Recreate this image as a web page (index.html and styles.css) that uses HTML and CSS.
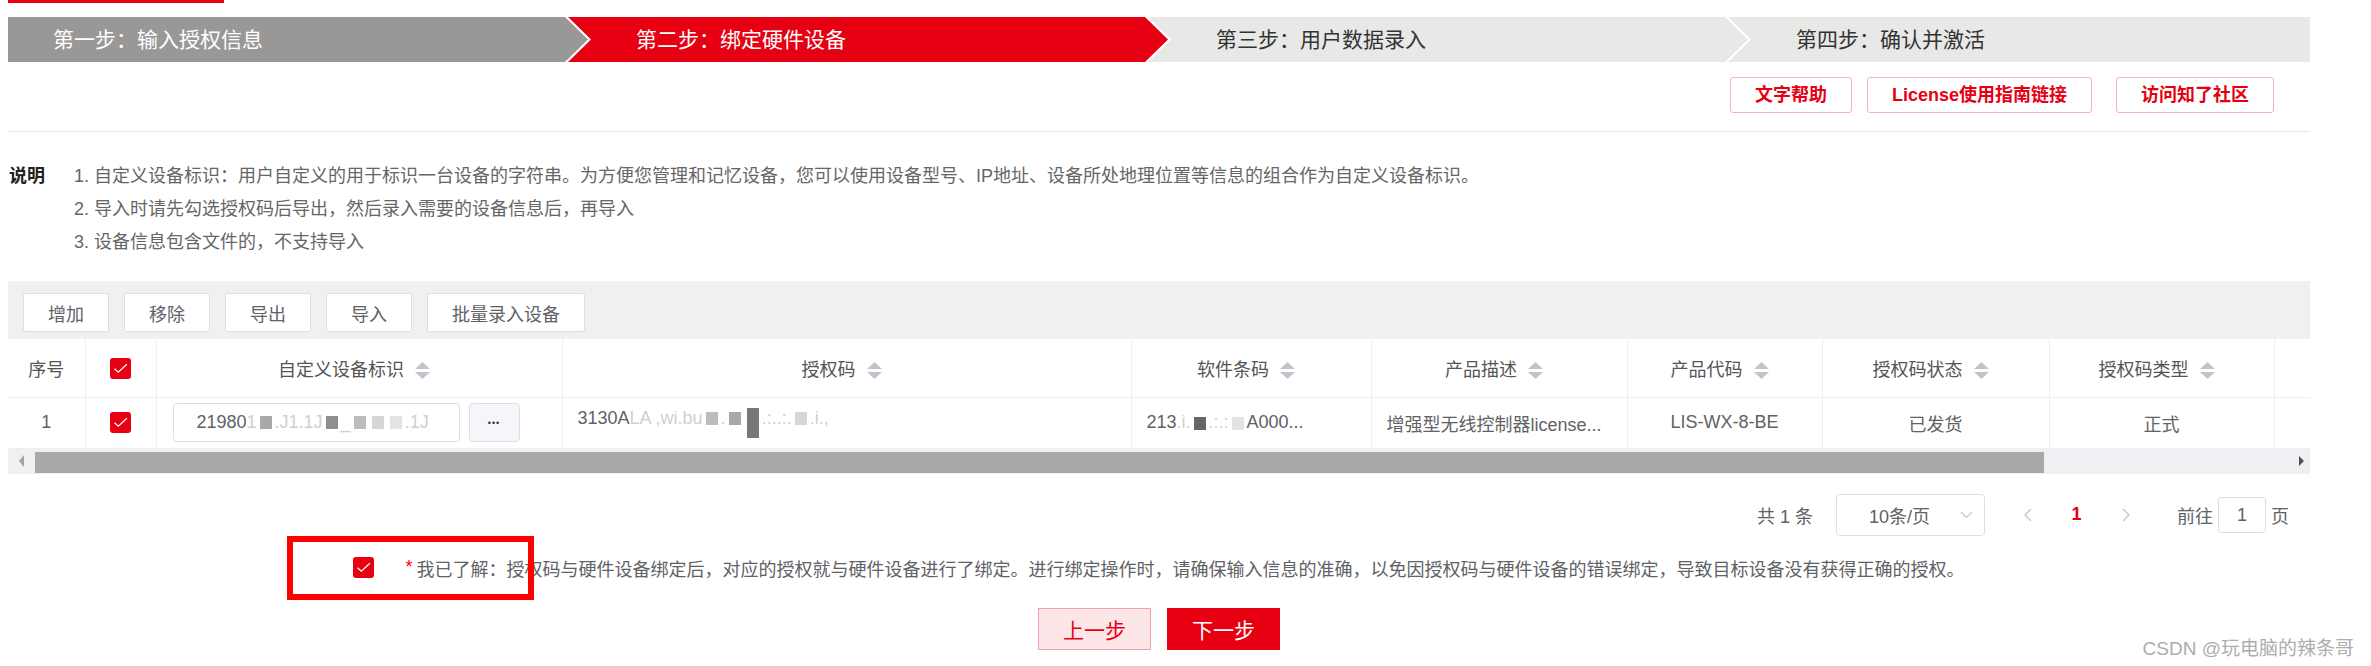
FILE: index.html
```html
<!DOCTYPE html>
<html lang="zh-CN">
<head>
    <meta charset="UTF-8">
    <meta name="viewport" content="width=device-width, initial-scale=1.0">
    <title>绑定硬件设备</title>
    <link rel="stylesheet" href="styles.css">
</head>
<body>

<div class="page">
    <div class="tab-line"></div>

    <!-- step bar -->
    <div class="steps">
        <div class="step step-done">第一步：输入授权信息</div>
        <div class="step step-active">第二步：绑定硬件设备</div>
        <div class="step">第三步：用户数据录入</div>
        <div class="step">第四步：确认并激活</div>
    </div>

    <div class="help-links">
        <a class="help-btn">文字帮助</a>
        <a class="help-btn">License使用指南链接</a>
        <a class="help-btn help-far">访问知了社区</a>
    </div>

    <div class="rule"></div>

    <div class="note">
        <div class="note-title">说明</div>
        <div class="note-list">
            <div>1. 自定义设备标识：用户自定义的用于标识一台设备的字符串。为方便您管理和记忆设备，您可以使用设备型号、IP地址、设备所处地理位置等信息的组合作为自定义设备标识。</div>
            <div>2. 导入时请先勾选授权码后导出，然后录入需要的设备信息后，再导入</div>
            <div>3. 设备信息包含文件的，不支持导入</div>
        </div>
    </div>

    <div class="toolbar">
        <button class="tool-btn">增加</button>
        <button class="tool-btn">移除</button>
        <button class="tool-btn">导出</button>
        <button class="tool-btn">导入</button>
        <button class="tool-btn">批量录入设备</button>
    </div>

    <table class="grid">
        <colgroup>
            <col style="width:77px">
            <col style="width:71px">
            <col style="width:406px">
            <col style="width:569px">
            <col style="width:240px">
            <col style="width:256px">
            <col style="width:195px">
            <col style="width:227px">
            <col style="width:225px">
            <col style="width:36px">
        </colgroup>
        <thead>
            <tr class="head-row">
                <th>序号</th>
                <th><span class="check"><svg viewBox="0 0 21 21"><path d="M4.5 10.7l3.8 3.6 8.6-8" fill="none" stroke="#fff" stroke-width="1.2"/></svg></span></th>
                <th>自定义设备标识<svg class="sort" viewBox="0 0 15 17"><path d="M7.5 0L15 7H0z M0 10h15l-7.5 7z" fill="#c0c4cc"/></svg></th>
                <th>授权码<svg class="sort" viewBox="0 0 15 17"><path d="M7.5 0L15 7H0z M0 10h15l-7.5 7z" fill="#c0c4cc"/></svg></th>
                <th>软件条码<svg class="sort" viewBox="0 0 15 17"><path d="M7.5 0L15 7H0z M0 10h15l-7.5 7z" fill="#c0c4cc"/></svg></th>
                <th>产品描述<svg class="sort" viewBox="0 0 15 17"><path d="M7.5 0L15 7H0z M0 10h15l-7.5 7z" fill="#c0c4cc"/></svg></th>
                <th>产品代码<svg class="sort" viewBox="0 0 15 17"><path d="M7.5 0L15 7H0z M0 10h15l-7.5 7z" fill="#c0c4cc"/></svg></th>
                <th>授权码状态<svg class="sort" viewBox="0 0 15 17"><path d="M7.5 0L15 7H0z M0 10h15l-7.5 7z" fill="#c0c4cc"/></svg></th>
                <th>授权码类型<svg class="sort" viewBox="0 0 15 17"><path d="M7.5 0L15 7H0z M0 10h15l-7.5 7z" fill="#c0c4cc"/></svg></th>
                <th></th>
            </tr>
        </thead>
        <tbody>
            <tr class="body-row">
                <td>1</td>
                <td><span class="check"><svg viewBox="0 0 21 21"><path d="M4.5 10.7l3.8 3.6 8.6-8" fill="none" stroke="#fff" stroke-width="1.2"/></svg></span></td>
                <td class="cell-left">
                    <div class="id-field">
                        <div class="id-input">21980<span class="faint">1</span><i class="px p2"></i><span class="faint">.J1.1J</span><i class="px p1"></i><span class="faint">_</span><i class="px p3"></i><i class="px p4"></i><i class="px p5"></i><span class="faint">.1J</span></div>
                        <button class="more-btn">•••</button>
                    </div>
                </td>
                <td class="cell-left">3130A<span class="faint">LA ,wi.bu</span><i class="px p3"></i><span class="faint">.</span><i class="px p2"></i><i class="px tall"></i><span class="faint">.:..:.</span><i class="px p4"></i><span class="faint">.i.,</span></td>
                <td class="cell-left">213<span class="faint">.i.</span><i class="px dark"></i><span class="faint">.:.:</span><i class="px p5"></i>A000...</td>
                <td class="cell-left">增强型无线控制器license...</td>
                <td>LIS-WX-8-BE</td>
                <td>已发货</td>
                <td>正式</td>
                <td></td>
            </tr>
        </tbody>
    </table>

    <!-- horizontal scrollbar under the table -->
    <div class="hscroll">
        <div class="hs-arrow"><span class="tri-left"></span></div>
        <div class="hs-thumb"></div>
        <div class="hs-track"></div>
        <div class="hs-arrow hs-arrow-right"><span class="tri-right"></span></div>
    </div>

    <div class="pager">
        <span class="total">共 1 条</span>
        <div class="sizes">
            <span>10条/页</span>
            <svg class="drop" viewBox="0 0 13 8"><polyline points="1,1 6.5,6.5 12,1" fill="none" stroke="#c0c4cc" stroke-width="1.2"/></svg>
        </div>
        <span class="pg-btn pg-prev"><svg viewBox="0 0 8 14"><polyline points="7,1 1,7 7,13" fill="none" stroke="#c0c4cc" stroke-width="1.3"/></svg></span>
        <span class="pg-num">1</span>
        <span class="pg-btn"><svg viewBox="0 0 8 14"><polyline points="1,1 7,7 1,13" fill="none" stroke="#c0c4cc" stroke-width="1.3"/></svg></span>
        <span class="jump">前往<span class="jump-input">1</span>页</span>
    </div>

    <div class="agree">
        <span class="agree-check">
            <span class="check"><svg viewBox="0 0 21 21"><path d="M4.5 10.7l3.8 3.6 8.6-8" fill="none" stroke="#fff" stroke-width="1.2"/></svg></span>
            <span class="mark"></span>
        </span>
        <span class="star">*</span>
        <span>我已了解：授权码与硬件设备绑定后，对应的授权就与硬件设备进行了绑定。进行绑定操作时，请确保输入信息的准确，以免因授权码与硬件设备的错误绑定，导致目标设备没有获得正确的授权。</span>
    </div>

    <div class="actions">
        <button class="btn btn-prev">上一步</button>
        <button class="btn btn-next">下一步</button>
    </div>
</div>

<div class="watermark">CSDN @玩电脑的辣条哥</div>

</body>
</html>
```

FILE: styles.css
```css
body {
    margin: 0;
    font-family: "Liberation Sans", "Noto Sans CJK SC", sans-serif;
    color: #606266;
    background: #fff;
}
.page {
    width: 2302px;
    margin-left: 8px;
}
.tab-line {
    width: 216px;
    height: 3px;
    background: #e60012;
}

/* steps */
.steps {
    display: flex;
    height: 45px;
    margin-top: 14px;
}
.step {
    width: 600px;
    margin-left: -20px;
    padding-left: 68px;
    box-sizing: border-box;
    line-height: 45px;
    font-size: 21px;
    color: #333;
    background: #e8e8e6;
    white-space: nowrap;
    clip-path: polygon(0 0, calc(100% - 23px) 0, 100% 50%, calc(100% - 23px) 100%, 0 100%, 23px 50%);
}
.step:first-child {
    width: 580px;
    margin-left: 0;
    padding-left: 45px;
    clip-path: polygon(0 0, calc(100% - 23px) 0, 100% 50%, calc(100% - 23px) 100%, 0 100%);
}
.step:last-child {
    flex: 1;
    clip-path: polygon(0 0, 100% 0, 100% 100%, 0 100%, 23px 50%);
}
.step-done {
    background: #9a9896;
    color: #fff;
}
.step-active {
    background: #e60012;
    color: #fff;
}

/* help links */
.help-links {
    display: flex;
    justify-content: flex-end;
    margin-top: 15px;
    padding-right: 36px;
}
.help-btn {
    height: 36px;
    line-height: 34px;
    padding: 0 24px;
    border: 1px solid #f7b3b8;
    border-radius: 3px;
    color: #e60012;
    font-size: 18px;
    font-weight: bold;
    margin-left: 15px;
    box-sizing: border-box;
    cursor: pointer;
}
.help-far {
    margin-left: 24px;
}
.rule {
    height: 1px;
    background: #e8e8e8;
    margin-top: 18px;
}

/* description */
.note {
    display: flex;
    margin-top: 28px;
    font-size: 18px;
    line-height: 33px;
}
.note-title {
    width: 65px;
    padding-left: 1px;
    font-weight: bold;
    color: #222;
}
.note-list {
    color: #666;
}

/* toolbar */
.toolbar {
    display: flex;
    align-items: flex-start;
    gap: 15px;
    height: 58px;
    margin-top: 22px;
    padding: 12px 0 0 15px;
    box-sizing: border-box;
    background: #f0f0f0;
}
.tool-btn {
    height: 39px;
    padding: 0 24px;
    border: 1px solid #dcdfe6;
    border-radius: 2px;
    background: #fff;
    font-family: inherit;
    font-size: 18px;
    color: #606266;
}

/* table */
.grid {
    width: 2302px;
    table-layout: fixed;
    border-collapse: collapse;
    font-size: 18px;
}
.grid th,
.grid td {
    padding: 0;
    text-align: center;
    vertical-align: middle;
    border-right: 1px solid #ebeef5;
    border-bottom: 1px solid #ebeef5;
    white-space: nowrap;
    overflow: hidden;
}
.grid th:last-child,
.grid td:last-child {
    border-right: none;
}
.grid th {
    font-weight: normal;
    color: #555;
}
.head-row {
    height: 58px;
}
.body-row {
    height: 51px;
}
.grid td.cell-left {
    text-align: left;
    padding-left: 15px;
}
.sort {
    width: 15px;
    height: 17px;
    margin: 0 10px 0 11px;
    vertical-align: -3px;
}
.check {
    display: inline-block;
    width: 21px;
    height: 21px;
    border-radius: 3px;
    background: #e60012;
    vertical-align: middle;
}
.check svg {
    display: block;
    width: 21px;
    height: 21px;
}
.id-field {
    display: flex;
    align-items: center;
    padding-left: 1px;
}
.id-input {
    display: flex;
    align-items: center;
    width: 287px;
    height: 39px;
    padding-left: 23px;
    box-sizing: border-box;
    border: 1px solid #dcdfe6;
    border-radius: 4px;
    color: #606266;
}
.more-btn {
    width: 51px;
    height: 39px;
    margin-left: 9px;
    border: 1px solid #dcdfe6;
    border-radius: 4px;
    background: #f4f6fa;
    color: #333;
    font-size: 9px;
    letter-spacing: 1px;
}

/* masked characters */
.faint {
    color: #cfcfcf;
}
.px {
    display: inline-block;
    width: 12px;
    height: 13px;
    margin: 0 3px;
    vertical-align: middle;
}
.p1 { background: #8e8e8e; }
.p2 { background: #a9a9a9; }
.p3 { background: #bdbdbd; }
.p4 { background: #d6d6d6; }
.p5 { background: #e3e3e3; }
.dark { background: #666; }
.tall {
    height: 30px;
    background: #777;
    vertical-align: -14px;
}

/* scrollbar */
.hscroll {
    display: flex;
    height: 25px;
    background: #f0f0f2;
}
.hs-arrow {
    width: 27px;
    display: flex;
    align-items: center;
    justify-content: center;
}
.hs-arrow-right {
    width: 17px;
}
.tri-left {
    border-top: 6px solid transparent;
    border-bottom: 6px solid transparent;
    border-right: 5px solid #a3a3a3;
}
.tri-right {
    border-top: 5px solid transparent;
    border-bottom: 5px solid transparent;
    border-left: 5px solid #505050;
}
.hs-thumb {
    width: 2009px;
    margin: 3px 0 1px;
    background: #a8a8a8;
}
.hs-track {
    flex: 1;
}

/* pagination */
.pager {
    display: flex;
    justify-content: flex-end;
    align-items: center;
    height: 42px;
    margin-top: 20px;
    padding-right: 21px;
    font-size: 18px;
    color: #606266;
}
.total {
    margin-right: 23px;
}
.sizes {
    display: flex;
    align-items: center;
    justify-content: space-between;
    width: 149px;
    height: 42px;
    padding: 0 11px 0 32px;
    box-sizing: border-box;
    border: 1px solid #dcdfe6;
    border-radius: 4px;
}
.drop {
    width: 13px;
    height: 8px;
}
.pg-btn {
    display: flex;
    justify-content: center;
    width: 45px;
}
.pg-prev {
    margin-left: 20px;
}
.pg-btn svg {
    width: 8px;
    height: 14px;
}
.pg-num {
    width: 53px;
    text-align: center;
    color: #e60012;
    font-weight: bold;
}
.jump {
    display: flex;
    align-items: center;
    margin-left: 29px;
}
.jump-input {
    width: 48px;
    height: 36px;
    margin: 0 5px;
    line-height: 34px;
    text-align: center;
    box-sizing: border-box;
    border: 1px solid #dcdfe6;
    border-radius: 3px;
}

/* agreement */
.agree {
    display: flex;
    justify-content: center;
    align-items: center;
    height: 42px;
    margin-top: 11px;
    font-size: 18px;
    color: #606266;
}
.agree-check {
    position: relative;
    display: flex;
}
.mark {
    position: absolute;
    left: -66px;
    top: -21px;
    width: 247px;
    height: 64px;
    box-sizing: border-box;
    border: 6px solid #ff0000;
}
.star {
    margin: 0 4px 0 31px;
    color: #f00;
}

/* prev / next */
.actions {
    display: flex;
    justify-content: center;
    gap: 16px;
    margin-top: 19px;
}
.btn {
    width: 113px;
    height: 42px;
    font-family: inherit;
    font-size: 21px;
    border: 1px solid;
    cursor: pointer;
}
.btn-prev {
    background: #fde6e8;
    border-color: #f5a0a8;
    color: #e60012;
}
.btn-next {
    background: #e60012;
    border-color: #e60012;
    color: #fff;
}

.watermark {
    position: absolute;
    top: 637px;
    right: 17px;
    font-size: 19px;
    line-height: 24px;
    color: #adadad;
}
```
